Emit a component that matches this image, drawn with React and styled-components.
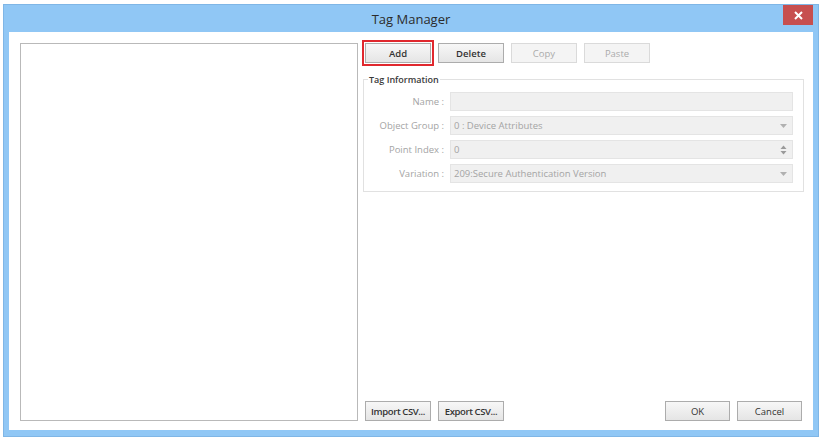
import React from "react";
import styled, { createGlobalStyle } from "styled-components";

const GlobalStyle = createGlobalStyle`
  html, body {
    margin: 0;
    padding: 0;
    background: #ffffff;
  }
  body {
    font-family: "Open Sans", "Noto Sans", "DejaVu Sans", sans-serif;
  }
`;

const Page = styled.div`
  width: 826px;
  height: 440px;
  padding: 4px 0 0 3px;
  box-sizing: border-box;
`;

const Window = styled.div`
  width: 816px;
  height: 433px;
  background: #90c7f5;
  border: 1px solid #7fb6e6;
  box-sizing: border-box;
  display: flex;
  flex-direction: column;
  padding: 0 5px 6px 5px;
`;

const TitleBar = styled.div`
  height: 27px;
  flex-shrink: 0;
  display: flex;
  align-items: center;
  justify-content: center;
  position: relative;
`;

const Title = styled.span`
  font-size: 13px;
  color: #2b2b2b;
  margin-top: 1px;
`;

const CloseButton = styled.div`
  position: absolute;
  right: 0px;
  top: 0px;
  width: 30px;
  height: 20px;
  background: #c74f4f;
  display: flex;
  align-items: center;
  justify-content: center;
`;

const Client = styled.div`
  flex: 1;
  background: #ffffff;
  display: flex;
  gap: 5px;
  padding: 11px 11px 9px 11px;
  box-sizing: border-box;
  min-height: 0;
`;

const ListBox = styled.div`
  width: 338px;
  flex-shrink: 0;
  border: 1px solid #b9b9b9;
  box-sizing: border-box;
  background: #fff;
`;

const RightPanel = styled.div`
  flex: 1;
  min-width: 0;
  display: flex;
  flex-direction: column;
`;

const ButtonRow = styled.div`
  display: flex;
  gap: ${(p) => p.$gap || 7}px;
  align-items: center;
  padding-left: 2px;
`;

const Button = styled.button`
  width: ${(p) => p.$w || 66}px;
  height: 20px;
  box-sizing: border-box;
  font-family: "Open Sans", "Noto Sans", sans-serif;
  font-size: 9.5px;
  font-weight: ${(p) => (p.$plain ? 400 : 600)};
  letter-spacing: ${(p) => (p.$tight ? "-0.4px" : "0")};
  padding: 0;
  color: ${(p) => (p.disabled ? "#ababab" : "#333333")};
  background: ${(p) =>
    p.disabled ? "#f4f4f4" : "linear-gradient(#f7f7f7, #e5e5e5)"};
  border: 1px solid ${(p) => (p.disabled ? "#dadada" : "#acacac")};
  border-radius: 0;
  outline: ${(p) => (p.$marked ? "2px solid #e0282e" : "none")};
  outline-offset: 1px;
`;

const GroupBox = styled.fieldset`
  margin: 10px 0 0 0;
  padding: 6px 10px 8px 6px;
  border: 1px solid #e1e1e1;
  width: 441px;
  box-sizing: border-box;
  display: flex;
  flex-direction: column;
  gap: 5px;
`;

const Legend = styled.legend`
  font-size: 9px;
  font-weight: 600;
  color: #3a3a3a;
  padding: 0 1px;
  margin-left: -2px;
`;

const FieldRow = styled.div`
  display: flex;
  align-items: center;
  gap: 6px;
`;

const Label = styled.div`
  width: 74px;
  text-align: right;
  font-size: 9.5px;
  color: #a4a4a4;
  white-space: nowrap;
`;

const Field = styled.div`
  flex: 1;
  height: 19px;
  box-sizing: border-box;
  background: #f0f0f0;
  border: 1px solid #e4e4e4;
  display: flex;
  align-items: center;
  justify-content: space-between;
  padding: 0 5px 0 3px;
  font-size: 9.5px;
  color: #a4a4a4;
`;

const Spacer = styled.div`
  flex: 1;
`;

const BottomRow = styled.div`
  display: flex;
  align-items: center;
  justify-content: space-between;
`;

const DropArrow = () => (
  <svg width="7" height="4" viewBox="0 0 7 4">
    <path d="M0 0 L7 0 L3.5 4 Z" fill="#b0b0b0" />
  </svg>
);

const SpinArrows = () => (
  <svg width="7" height="10" viewBox="0 0 7 10">
    <path d="M0.5 4 L6.5 4 L3.5 0.5 Z" fill="#9a9a9a" />
    <path d="M0.5 6 L6.5 6 L3.5 9.5 Z" fill="#9a9a9a" />
  </svg>
);

const CloseIcon = () => (
  <svg width="9" height="9" viewBox="0 0 9 9">
    <path d="M1 1 L8 8 M8 1 L1 8" stroke="#ffffff" strokeWidth="2" />
  </svg>
);

export default function App() {
  return (
    <>
      <GlobalStyle />
      <Page>
        <Window>
          <TitleBar>
            <Title>Tag Manager</Title>
            <CloseButton>
              <CloseIcon />
            </CloseButton>
          </TitleBar>
          <Client>
            <ListBox />
            <RightPanel>
              <ButtonRow>
                <Button $marked>Add</Button>
                <Button>Delete</Button>
                <Button disabled $plain>Copy</Button>
                <Button disabled $plain>Paste</Button>
              </ButtonRow>
              <GroupBox>
                <Legend>Tag Information</Legend>
                <FieldRow>
                  <Label>Name :</Label>
                  <Field />
                </FieldRow>
                <FieldRow>
                  <Label>Object Group :</Label>
                  <Field>
                    <span>0 : Device Attributes</span>
                    <DropArrow />
                  </Field>
                </FieldRow>
                <FieldRow>
                  <Label>Point Index :</Label>
                  <Field>
                    <span>0</span>
                    <SpinArrows />
                  </Field>
                </FieldRow>
                <FieldRow>
                  <Label>Variation :</Label>
                  <Field>
                    <span>209:Secure Authentication Version</span>
                    <DropArrow />
                  </Field>
                </FieldRow>
              </GroupBox>
              <Spacer />
              <BottomRow>
                <ButtonRow>
                  <Button $tight>Import CSV...</Button>
                  <Button $tight>Export CSV...</Button>
                </ButtonRow>
                <ButtonRow>
                  <Button $w={65} $plain>OK</Button>
                  <Button $w={65} $plain>Cancel</Button>
                </ButtonRow>
              </BottomRow>
            </RightPanel>
          </Client>
        </Window>
      </Page>
    </>
  );
}
